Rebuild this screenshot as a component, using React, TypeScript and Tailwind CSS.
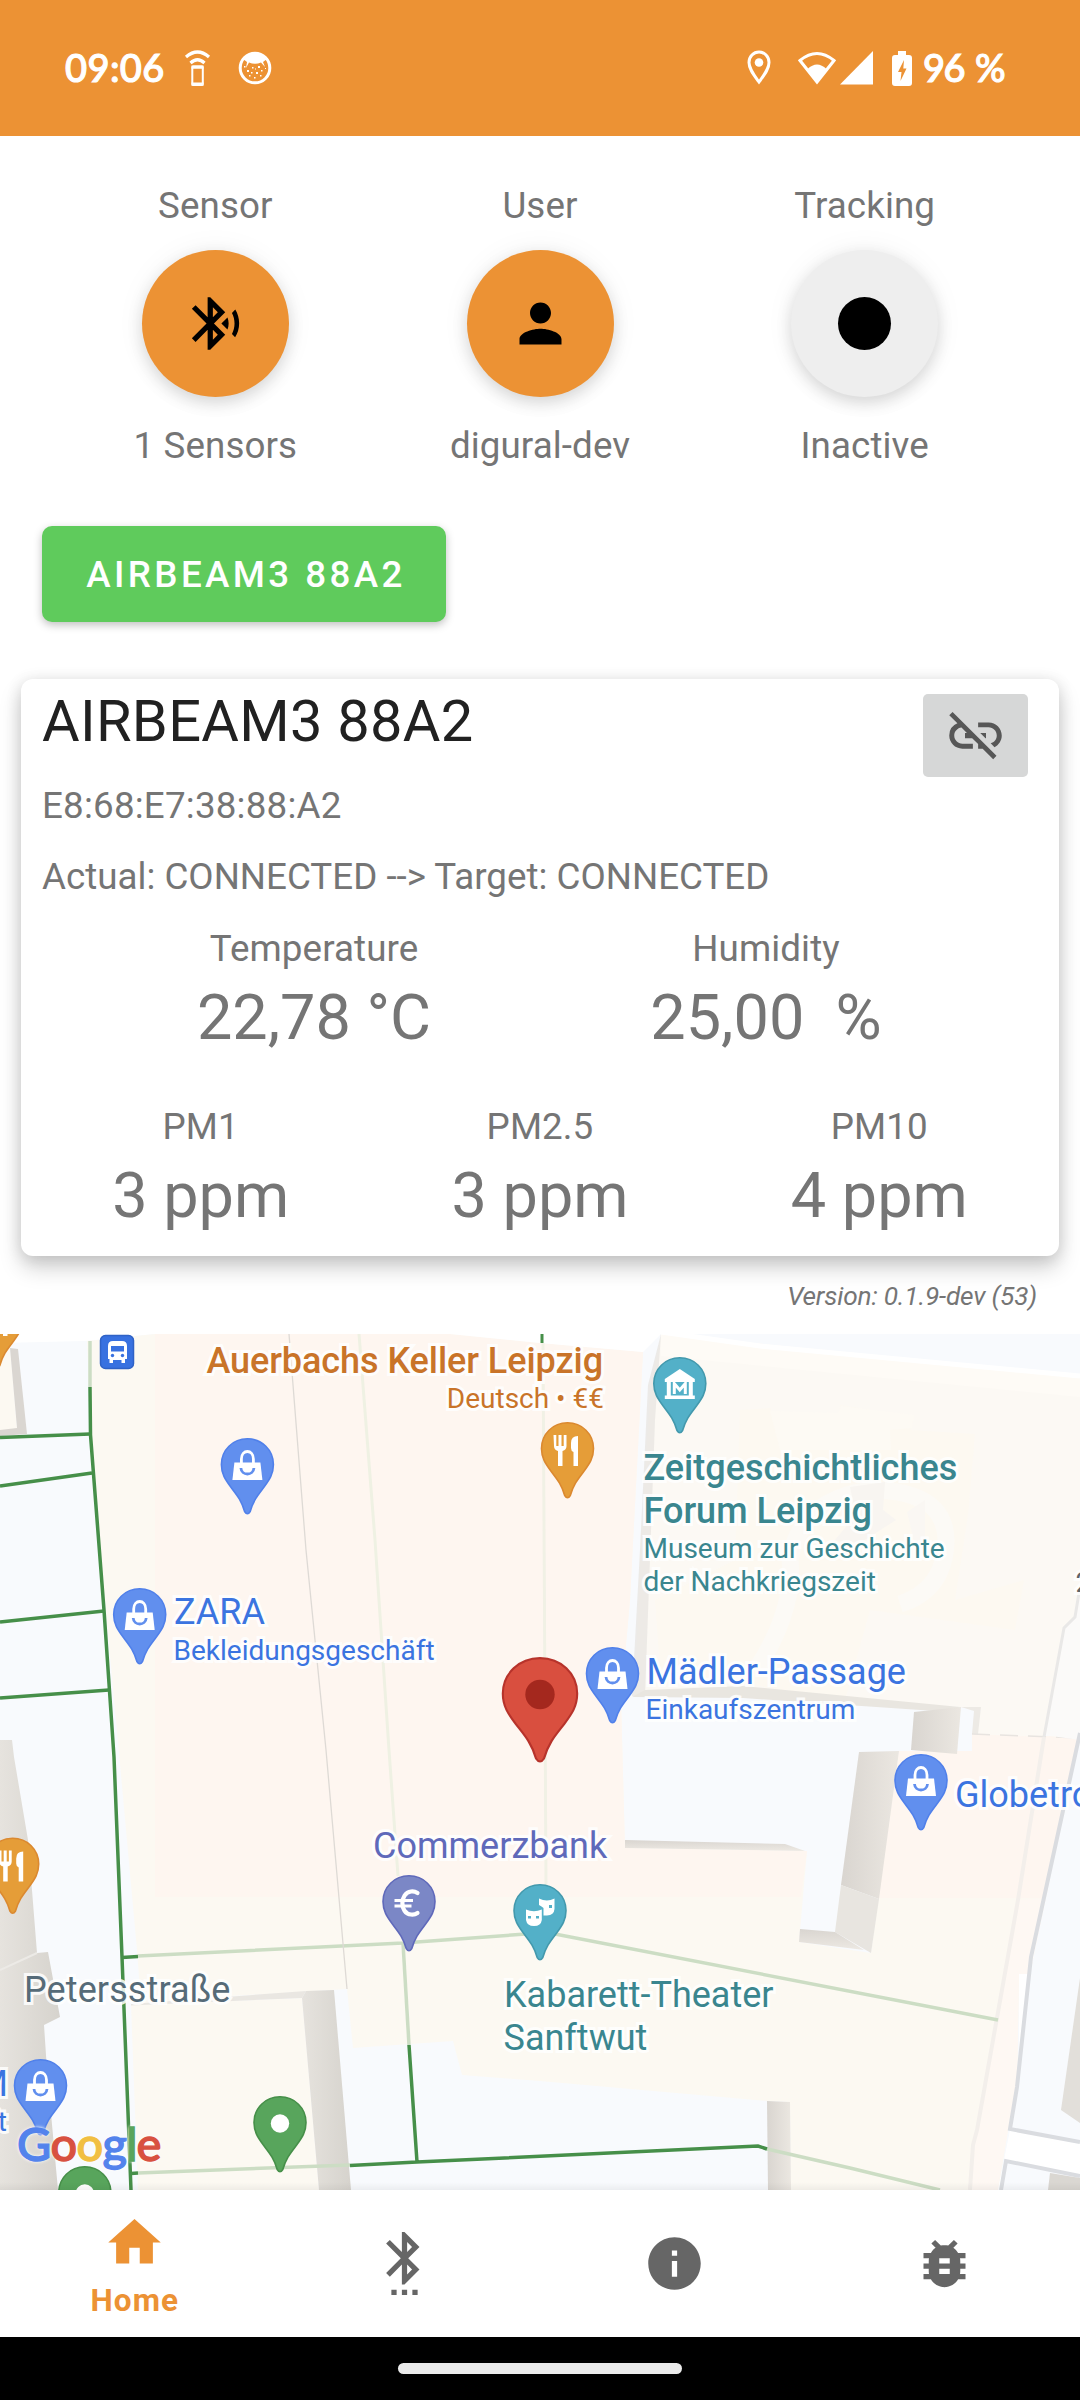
import type { ReactNode } from "react";
import {
  MdBluetoothAudio,
  MdBugReport,
  MdHome,
  MdInfo,
  MdLinkOff,
  MdPerson,
  MdSettingsBluetooth,
} from "react-icons/md";

const MAP_TOP = 1334;

/* ---------- status bar ---------- */

function StatusBar() {
  return (
    <header className="flex h-[136px] items-center justify-between bg-[#EC9234] pr-[76px] pl-[65px] font-['Lato'] text-[38px] font-medium text-white [-webkit-text-stroke:1.1px_white]">
      <div className="flex items-center">
        <span className="-mt-[2px] w-[100px] tracking-[0.4px]">09:06</span>
        <svg className="ml-[19px] h-[38px] w-[27px]" viewBox="0 0 27 38" fill="none" stroke="#fff">
          <path d="M2 8 Q13.500 -2 25 8" strokeWidth="3.200" />
          <path d="M6.500 14 Q13.500 7.500 20.500 14" strokeWidth="3.200" />
          <rect x="8.300" y="17.500" width="10.500" height="18.500" rx="1" strokeWidth="2" />
          <path d="M7.500 18.200h12M7.500 35.200h12" strokeWidth="3.200" />
        </svg>
        <svg className="ml-[27px] h-[36px] w-[34px]" viewBox="0 0 34 36" fill="none">
          <circle cx="17" cy="18" r="14.800" stroke="#fff" strokeWidth="3" />
          <path d="M5 9Q17-3 29 9L25 12L27 17L23 12.500Q17 15 11 12.500L8 18L9 12Z" fill="#fff" />
          <path
            d="M9 20h2v2H9zM14 17h1.500v1.500H14zM20 16h2v2h-2zM13 22h1.500v1.500H13zM18 22h2v2h-2zM23 20h1.500v1.500H23zM11 25h1.500v1.500H11zM16 27h1.500v1.500H16zM22 25h1.500v1.500H22zM6 16h1.500v1.500H6zM27 18h1v1h-1zM17 18.500h1v1h-1z"
            fill="#fff"
          />
        </svg>
      </div>
      <div className="flex items-center">
        <svg className="h-[36px] w-[24px]" viewBox="0 0 24 36" fill="none">
          <path d="M12 2C6.500 2 2 6.500 2 12.500C2 19 7 25 12 32C17 25 22 19 22 12.500C22 6.500 17.500 2 12 2Z" stroke="#fff" strokeWidth="3" />
          <circle cx="12" cy="12.500" r="4.300" fill="#fff" />
        </svg>
        <svg className="ml-[27px] h-[34px] w-[38px]" viewBox="0 0 38 34">
          <path d="M2 9.500Q19-4.500 36 9.500L19 31Z" fill="none" stroke="#fff" strokeWidth="3" />
          <path d="M9.500 18Q19 9 28.500 18L19 32Z" fill="#fff" />
        </svg>
        <svg className="ml-[4px] h-[34px] w-[33px]" viewBox="0 0 33 34">
          <path d="M33 0V33.500H0Z" fill="#fff" />
        </svg>
        <svg className="ml-[19px] h-[35px] w-[20px]" viewBox="0 0 20 35">
          <path d="M6 0h8v4h3q3 0 3 3v25q0 3-3 3H3q-3 0-3-3V7q0-3 3-3h3Z" fill="#fff" />
          <path d="M12 9L6 21h3.500l-1 9L14.500 17.500H11.300Z" fill="#EC9234" />
        </svg>
        <span className="-mt-[2px] ml-[11px] w-[81px] whitespace-nowrap tracking-[-1.6px] [word-spacing:3px]">96 %</span>
      </div>
    </header>
  );
}

/* ---------- round status buttons ---------- */

function StatusItem({ title, caption, active, children }: { title: string; caption: string; active?: boolean; children: ReactNode }) {
  return (
    <div className="flex flex-1 flex-col items-center text-[36.75px] leading-[49px] tracking-[0.1px] text-[#757575]">
      <span>{title}</span>
      <button
        className={
          active
            ? "mt-5 mb-6 flex size-[147px] items-center justify-center rounded-full bg-[#EC9234] text-black shadow-[0_6px_16px_rgba(0,0,0,0.14),0_0_30px_rgba(0,0,0,0.05)]"
            : "mt-5 mb-6 flex size-[147px] items-center justify-center rounded-full bg-[#EEEEEE] text-black shadow-[0_6px_16px_rgba(0,0,0,0.14),0_0_30px_rgba(0,0,0,0.05)]"
        }
      >
        {children}
      </button>
      <span>{caption}</span>
    </div>
  );
}

/* ---------- sensor card ---------- */

function Reading({ label, value }: { label: string; value: string }) {
  return (
    <div className="flex flex-1 flex-col items-center">
      <span className="text-[36.75px] leading-[49px] tracking-[0.1px]">{label}</span>
      <span className="mt-[8px] h-[73px] text-[63px] leading-[74px] whitespace-pre">{value}</span>
    </div>
  );
}

function SensorCard() {
  return (
    <section className="mx-[21px] mt-[57px] h-[577px] rounded-[12px] bg-white text-[#757575] shadow-[0_12px_22px_rgba(0,0,0,0.18),0_2px_16px_rgba(0,0,0,0.12)]">
      <div className="flex items-start justify-between pl-[21px] pr-[31px]">
        <h2 className="mt-2 text-[57.75px] leading-[68px] tracking-[0.3px] text-[#212121]">AIRBEAM3 88A2</h2>
        <button className="mt-[15px] flex h-[83px] w-[105px] items-center justify-center rounded-[5px] bg-[#D6D7D7] text-[#575757]">
          <MdLinkOff className="size-[63px]" />
        </button>
      </div>
      <div className="-mt-[22px] flex flex-col gap-[22px] pl-[21px] text-[36.75px] leading-[49px]">
        <span className="mt-[26px] tracking-[0.2px]">E8:68:E7:38:88:A2</span>
        <span>{"Actual: CONNECTED --> Target: CONNECTED"}</span>
      </div>
      <div className="mx-[67px] mt-[23px] flex">
        <Reading label="Temperature" value="22,78 °C" />
        <Reading label="Humidity" value="25,00  %" />
      </div>
      <div className="mx-[10px] mt-[48px] flex">
        <Reading label="PM1" value="3 ppm" />
        <Reading label="PM2.5" value="3 ppm" />
        <Reading label="PM10" value="4 ppm" />
      </div>
    </section>
  );
}

/* ---------- map ---------- */

const PIN_PATH =
  "M-26 26.500C-26 12 -14.500 .8 0 .8S26 12 26 26.500C26 36 22 41.500 17 48.500C11 56.500 6 62 2.800 73.500Q0 78 -2.800 73.500C-6 62 -11 56.500 -17 48.500C-22 41.500 -26 36 -26 26.500Z";

type PinKind = "bag" | "food" | "museum" | "mask" | "euro" | "dot";

const PIN_FILL: Record<PinKind, string> = {
  bag: "#618FEE",
  food: "#E59D38",
  museum: "#53B0C8",
  mask: "#53B0C8",
  euro: "#7B87C6",
  dot: "#58A55C",
};
const PIN_EDGE: Record<PinKind, string> = {
  bag: "#5080EA",
  food: "#DB8930",
  museum: "#4399AD",
  mask: "#4399AD",
  euro: "#5F69BA",
  dot: "#468F49",
};

function PinGlyph({ kind }: { kind: PinKind }) {
  if (kind === "bag")
    return (
      <g>
        <path d="M-6 25V21C-6 11 6 11 6 21V25" fill="none" stroke="#fff" strokeWidth="2.800" />
        <path d="M-13 24.500H13L15 42H-15Z" fill="#fff" />
        <path d="M-6.500 30C-6 38 6 38 6.500 30" fill="none" stroke="#618FEE" strokeWidth="2.800" />
      </g>
    );
  if (kind === "food")
    return (
      <g fill="#fff">
        <path d="M-14 13h2.800v11h2.200V13h3v11h2.200V13H-1v11q0 4-4 5V44h-4.500V29q-4-1-4-5Z" />
        <path d="M10.500 14V44H6V30Q3.500 29 3.500 26V21Q3.500 14 10.500 14Z" />
      </g>
    );
  if (kind === "museum")
    return (
      <g>
        <path d="M0 12L15 22V25H-15V22Z" fill="#fff" />
        <path d="M-13 25h4V39h-4ZM9 25h4V39H9ZM-15 38.500H15V42H-15Z" fill="#fff" />
        <path d="M-5.500 37V26.500L0 33L5.500 26.500V37" fill="none" stroke="#fff" strokeWidth="3" />
      </g>
    );
  if (kind === "mask")
    return (
      <g>
        <path d="M-1 14.500Q7 18.500 14.500 14.500V25Q14 31 7 31.500H3.500V24Q1 22 -1 21Z" fill="#fff" />
        <path d="M-14 25.500Q-6 29 1.800 25.500V36Q1 42 -6 42Q-13 42 -14 36Z" fill="#fff" />
        <path d="M9 21h3v3H9zM-12 32h3v2.500h-3zM-4 32h3v2.500h-3z" fill="#53B0C8" />
      </g>
    );
  if (kind === "euro")
    return (
      <g fill="none" stroke="#fff" strokeWidth="4.200" strokeLinecap="round">
        <path d="M8.500 18Q5.500 16 2 16.500C-9.500 18 -9.500 38.500 2 39.500Q5.500 40 8.500 38" />
        <path d="M-14.500 25.500H4M-14.500 31H2.500" strokeWidth="2.800" strokeLinecap="butt" />
      </g>
    );
  return <circle cx="0" cy="27.500" r="9.200" fill="#fff" />;
}

const PINS: { x: number; y: number; kind: PinKind }[] = [
  { x: -3, y: 1292, kind: "food" },
  { x: 247.4, y: 1438, kind: "bag" },
  { x: 139.7, y: 1588, kind: "bag" },
  { x: 612.5, y: 1647, kind: "bag" },
  { x: 921, y: 1754, kind: "bag" },
  { x: 40.5, y: 2059, kind: "bag" },
  { x: 567.5, y: 1422, kind: "food" },
  { x: 12.7, y: 1837.5, kind: "food" },
  { x: 679.8, y: 1357, kind: "museum" },
  { x: 540, y: 1884, kind: "mask" },
  { x: 409, y: 1875, kind: "euro" },
  { x: 280, y: 2096, kind: "dot" },
  { x: 84.8, y: 2166, kind: "dot" },
];

function MapDrawing() {
  return (
    <svg className="absolute inset-0 h-full w-full" viewBox="0 1334 1080 856">
      <defs>
        <linearGradient id="wallH" x1="0" x2="1" y1="0" y2="0">
          <stop offset="0" stopColor="#D9D5D0" />
          <stop offset="1" stopColor="#EBE7E1" />
        </linearGradient>
        <linearGradient id="wallR" x1="0" x2="1" y1="0" y2="0">
          <stop offset="0" stopColor="#E6E3DE" />
          <stop offset="1" stopColor="#D6D3CD" />
        </linearGradient>
        <linearGradient id="wallV" x1="0" x2="0" y1="0" y2="1">
          <stop offset="0" stopColor="#D9D5D0" />
          <stop offset="1" stopColor="#EDE9E3" />
        </linearGradient>
      </defs>
      <rect x="0" y="1334" width="1080" height="856" fill="#F8FAFD" />
      <path d="M0 1334H155L125 1337L85 1341L0 1343Z" fill="#fff" />

      {/* western block */}
      <path
        d="M87 1341L125 1337L155 1334H450L540 1343L643 1352L630 1600L621 1700L625 1848L807 1851L799 1942L871 1953L899 1751H972V1734L1080 1737L1062 1815L1030 1974L1019 1974L1017 2090L1008 2130L998 2190H791L790 2102L768 2101L540 2081L462 2075L453 2041L353 2048L347 1989L232 1996L141 2004L137 1950L121 1775L104 1590L91 1430Z"
        fill="#FCF9F2"
      />
      <path d="M155 1334H450L540 1343L643 1352L630 1600L621 1700L625 1848L807 1851L801 1897H155Z" fill="#FEF6F0" />
      <path d="M899 1751H972V1734L1080 1737L1062 1815L1046 1898H878Z" fill="#FEF6F0" />
      <path d="M1018 1900L1046 1898L1030 1974H1019L1017 2090L1008 2130L998 2190H970L973 2145L977 2130Z" fill="#FEF8F3" />
      <path d="M450 1334H661L643 1352L540 1343Z" fill="#fff" />

      {/* forum building */}
      <path d="M661 1334L1080 1375V1587L1075 1617L1064 1628L1044 1737L972 1734L981 1710L960 1707L743 1697L635 1697L640 1550L650 1390Z" fill="#FCF9F4" />
      <path d="M661 1334L1080 1375V1397L661 1356Z" fill="#FEFBF6" />
      <path d="M740 1410L770 1408L775 1424L838 1424L840 1405L914 1417L910 1430L975 1434L968 1515L955 1600L1024 1580L1015 1630L870 1610L845 1700L660 1670L655 1600L735 1560Z" fill="#FDF9F1" />
      <path d="M770 1411L838 1413L841 1406L914 1415L912 1428L890 1430L891 1450L780 1450Z" fill="#FDFAF4" />
      <path d="M756 1670Q795 1610 790 1560Q800 1500 870 1490Q945 1490 946 1540Q945 1590 900 1604" fill="none" stroke="#FCFAF6" strokeWidth="17" />
      <path d="M850 1487L885 1482L883 1510L896 1520L860 1543L835 1540L856 1515Z" fill="#F8F5F1" />
      <path d="M907 1512L925 1500V1540L915 1545Z" fill="#FAF7F3" />
      <path d="M661 1334L655 1420L645 1696H632L640 1550L648 1385Z" fill="#E9E6E2" opacity=".8" />
      <path d="M645 1690L743 1686L960 1707L950 1712L743 1698L632 1697Z" fill="#E9E6E0" />
      <path d="M661 1332L760 1346L1080 1376" stroke="#fff" strokeWidth="5" fill="none" />
      <path d="M914 1712L961 1707L957 1754L911 1750Z" fill="url(#wallH)" />
      <path d="M961 1707H981L978 1734H972L974 1711Z" fill="#EDEAE5" />
      <path d="M972 1734L1080 1738" stroke="#E8E4E0" strokeWidth="1.500" strokeDasharray="18 10" />

      {/* courtyard walls */}
      <path d="M625 1840L785 1844L805 1851L625 1848Z" fill="url(#wallV)" />
      <path d="M859 1752L899 1751L879 1899L841 1885Z" fill="url(#wallH)" />
      <path d="M841 1885L879 1899L871 1953L835 1932Z" fill="#E8E5E0" />
      <path d="M800 1929L835 1932L864 1950L799 1942Z" fill="url(#wallV)" />

      {/* south-west buildings */}
      <path d="M131 2005L302 1998L319 2190H138Z" fill="#FCF9F2" />
      <path d="M131 2004L306 1991L302 1998L131 2005.500Z" fill="#EAE7E2" />
      <path d="M302 1998L306 1991L334 1990L351 2190H319Z" fill="url(#wallR)" />
      <path d="M767 2101L790 2102L791 2190H768Z" fill="url(#wallH)" />
      <path d="M0 1740H12L14 1757L28 1840L37 1953L48 1952L60 2017L44 2025L47 2070L58 2190H0Z" fill="url(#wallR)" />
      <path d="M0 1970L37 1953" stroke="#ECEAE6" strokeWidth="2" />
      <path d="M0 1350L10 1348L17 1429L0 1431Z" fill="#FCF9F2" />
      <path d="M10 1348L18 1349L27 1434L0 1436V1430L17 1428Z" fill="#DAD6D1" />

      {/* eastern road */}
      <path d="M1080 1735L1062 1815L1030 1974H1019V2070L1010 2130L998 2190H1001L1006 2161L1080 2176V2142L1010 2129L1017 2087L1031 1957L1080 1735Z" fill="#fff" />
      <path d="M1080 1590V1740L1044 1735L1064 1628L1075 1617Z" fill="#FBFAF9" />
      <path d="M1080 1587L1075 1617L1064 1628L1044 1737" fill="none" stroke="#E9E8E7" strokeWidth="3" />
      <path d="M1044 1737L1018 1900L977 2130L973 2145L970 2190" fill="none" stroke="#F3EFEB" strokeWidth="4" />
      <path d="M1080 1733L1031 1957L1017 2087L1010 2129L1080 2142" fill="none" stroke="#DADCE0" strokeWidth="4" />
      <path d="M1080 2176L1006 2161L1001 2190" fill="none" stroke="#DADCE0" strokeWidth="4" />
      <path d="M1080 1978L1061 2110L1080 2123Z" fill="#E2DFDA" />
      <path d="M1050 2173L1080 2178V2190H1048Z" fill="#DAD7D2" />

      {/* paths */}
      <g fill="none" stroke="#CCDDC4" strokeWidth="3.500">
        <path d="M90 1341V1387" />
        <path d="M138 1956L403 1943L540 1933L555 1934L998 2020" />
        <path d="M403 1943L409 2045" />
        <path d="M138 2173L350 2165" />
        <path d="M767 2149L850 2168L940 2190" />
      </g>
      <path d="M359 1334L375 1540L389 1750L398 1876" fill="none" stroke="#EFF1E3" strokeWidth="3" />
      <path d="M543 1343L546 1886" fill="none" stroke="#F1F1E5" strokeWidth="3" />
      <path d="M542 1334V1343" stroke="#468F49" strokeWidth="3" />
      <path d="M289 1334L306 1550L326 1750L347 1989" fill="none" stroke="#DEDAD5" strokeWidth="1.300" />
      <g fill="none" stroke="#468F49" strokeWidth="3.500">
        <path d="M90 1387L90.500 1435L104 1610L114 1757L122 1957L131 2190" />
        <path d="M0 1437.500L90 1434M0 1486L92 1473M0 1622L104 1611M0 1698L109 1690" />
        <path d="M122 1957.500L138 1956.500M131 2173.500L138 2173" />
        <path d="M409 2045L417 2162M350 2165.500L417 2162L758 2146L767 2149" />
      </g>

      {/* bus stop */}
      <rect x="100.500" y="1335.500" width="33" height="33" rx="5" fill="#3871E0" stroke="#2F62C6" strokeWidth="1.500" />
      <path d="M108 1346Q108 1341 113 1341H122Q127 1341 127 1346V1359H125V1363H121.500V1360H113V1363H109.500V1359H108Z" fill="#fff" />
      <path d="M111 1346H124V1351.500H111Z" fill="#3871E0" />
      <circle cx="112.500" cy="1355.500" r="1.700" fill="#3871E0" />
      <circle cx="122.500" cy="1355.500" r="1.700" fill="#3871E0" />

      {PINS.map((p) => (
        <g key={`${p.x}-${p.y}`} transform={`translate(${p.x} ${p.y})`}>
          <path d={PIN_PATH} fill={PIN_FILL[p.kind]} stroke={PIN_EDGE[p.kind]} strokeWidth="1.600" />
          <PinGlyph kind={p.kind} />
        </g>
      ))}

      {/* current position */}
      <g transform="translate(540 1657)">
        <path d={PIN_PATH} transform="scale(1.43 1.38)" fill="#D94F3F" stroke="#B7332B" strokeWidth="1.500" />
        <circle cx="0" cy="37.500" r="14.700" fill="#A4281E" />
      </g>
    </svg>
  );
}

type Label = { text: string; x: number; base: number; size: 28 | 36; tone: string; right?: boolean };

const BLUE = "text-[#3B74E0]";
const TEAL = "text-[#3A868F]";

const LABELS: Label[] = [
  { text: "Auerbachs Keller Leipzig", x: 603, base: 1373, size: 36, tone: "text-[#C97429] font-medium tracking-[-0.06px]", right: true },
  { text: "Deutsch • €€", x: 604, base: 1409, size: 28, tone: "text-[#C97429]", right: true },
  { text: "ZARA", x: 174, base: 1624.5, size: 36, tone: BLUE },
  { text: "Bekleidungsgeschäft", x: 173.5, base: 1661, size: 28, tone: BLUE },
  { text: "Zeitgeschichtliches", x: 643.5, base: 1480, size: 36, tone: "text-[#3A868F] font-medium" },
  { text: "Forum Leipzig", x: 643.5, base: 1523, size: 36, tone: "text-[#3A868F] font-medium" },
  { text: "Museum zur Geschichte", x: 643.5, base: 1559, size: 28, tone: TEAL },
  { text: "der Nachkriegszeit", x: 643.5, base: 1592, size: 28, tone: TEAL },
  { text: "Mädler-Passage", x: 646.5, base: 1684, size: 36, tone: BLUE },
  { text: "Einkaufszentrum", x: 645.5, base: 1720, size: 28, tone: BLUE },
  { text: "Globetrotter", x: 955, base: 1807, size: 36, tone: BLUE },
  { text: "Commerzbank", x: 373, base: 1858, size: 36, tone: "text-[#5F69BA]" },
  { text: "Petersstraße", x: 24, base: 2002.5, size: 36, tone: "text-[#566B78] tracking-[0.1px]" },
  { text: "Kabarett-Theater", x: 504, base: 2007, size: 36, tone: TEAL },
  { text: "Sanftwut", x: 503.5, base: 2050, size: 36, tone: TEAL },
  { text: "H&M", x: 8, base: 2096, size: 36, tone: BLUE, right: true },
  { text: "Modegeschäft", x: 7, base: 2132, size: 28, tone: BLUE, right: true },
  { text: "2", x: 1075.5, base: 1593, size: 28, tone: "text-[#5F6368]" },
];

function MapLabel({ label }: { label: Label }) {
  const top = label.base - MAP_TOP - label.size * 0.8415;
  return (
    <span
      className={`absolute whitespace-nowrap leading-none [-webkit-text-stroke:6px_rgba(255,255,255,0.85)] [paint-order:stroke_fill] ${
        label.size === 36 ? "text-[36px]" : "text-[28px]"
      } ${label.tone}`}
      style={label.right ? { top, right: 1080 - label.x } : { top, left: label.x }}
    >
      {label.text}
    </span>
  );
}

function MapView() {
  return (
    <section className="relative h-[856px] overflow-hidden">
      <MapDrawing />
      {LABELS.map((l) => (
        <MapLabel key={l.text} label={l} />
      ))}
      <div className="absolute top-[786px] left-[17px] flex font-['Lato'] text-[47px] leading-none font-medium tracking-[-0.8px] [-webkit-text-stroke:1.3px_currentColor] [text-shadow:0_0_3px_white,0_0_4px_white]">
        <span className="text-[#5383EC]">G</span>
        <span className="text-[#D85140]">o</span>
        <span className="text-[#F1BF42]">o</span>
        <span className="text-[#5383EC]">g</span>
        <span className="text-[#58A55C]">l</span>
        <span className="text-[#D85140]">e</span>
      </div>
      <div className="absolute inset-x-0 bottom-0 h-[8px] bg-gradient-to-b from-transparent to-black/5" />
    </section>
  );
}

/* ---------- bottom navigation ---------- */

function NavItem({ children }: { children: ReactNode }) {
  return <button className="flex flex-1 items-center justify-center text-[#666666]">{children}</button>;
}

function BottomNav() {
  return (
    <nav className="flex h-[147px] bg-white pr-[1px]">
      <button className="flex flex-1 flex-col items-center pt-[21px] text-[#EC9234]">
        <MdHome className="size-[63px]" />
        <span className="mt-[8px] text-[31.5px] leading-[37px] font-bold tracking-[1.1px]">Home</span>
      </button>
      <NavItem>
        <MdSettingsBluetooth className="size-[63px]" />
      </NavItem>
      <NavItem>
        <MdInfo className="size-[63px]" />
      </NavItem>
      <NavItem>
        <MdBugReport className="size-[63px]" />
      </NavItem>
    </nav>
  );
}

export default function App() {
  return (
    <div className="flex h-[2400px] w-[1080px] flex-col overflow-hidden bg-white font-['Roboto',sans-serif]">
      <StatusBar />
      <div className="flex pr-[53px] pl-[53px] pt-[45px]">
        <StatusItem title="Sensor" caption="1 Sensors" active>
          <MdBluetoothAudio className="size-[63px]" />
        </StatusItem>
        <StatusItem title="User" caption="digural-dev" active>
          <MdPerson className="size-[63px]" />
        </StatusItem>
        <StatusItem title="Tracking" caption="Inactive">
          <span className="size-[53px] rounded-full bg-black" />
        </StatusItem>
      </div>
      <button className="mt-[56px] ml-[42px] flex h-[96px] w-[404px] items-center justify-center rounded-[10px] bg-[#5FCB5C] pt-[2px] pl-[4px] text-[36.75px] font-medium tracking-[3.4px] text-white shadow-[0_3px_8px_rgba(0,0,0,0.25)]">
        AIRBEAM3 88A2
      </button>
      <SensorCard />
      <div className="flex h-[78px] justify-end pt-[25px] pr-[43px]">
        <span className="text-[26.25px] leading-[31px] tracking-[-0.2px] text-[#757575] italic">Version: 0.1.9-dev (53)</span>
      </div>
      <MapView />
      <BottomNav />
      <div className="flex h-[63px] justify-center bg-black pt-[26px]">
        <div className="h-[11px] w-[284px] rounded-full bg-[#EBEBEB]" />
      </div>
    </div>
  );
}
